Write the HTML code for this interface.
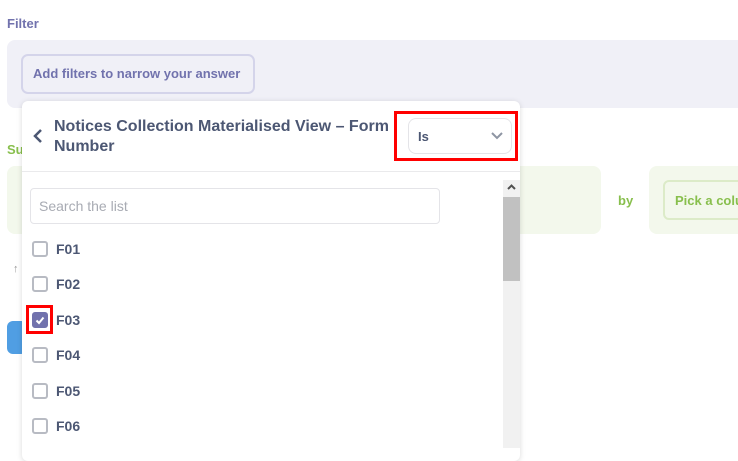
<!DOCTYPE html>
<html><head><style>
body{margin:0;width:738px;height:448px;overflow:hidden;background:#fff;font-family:"Liberation Sans",sans-serif;position:relative}
.a{position:absolute;white-space:nowrap}
.cb{position:absolute;left:32px;width:12px;height:12px;border:2px solid #b8bbc3;border-radius:3px}
.it{position:absolute;left:56px;font-weight:bold;font-size:14px;color:#4c5773}
</style></head><body>
<div class="a" style="left:7px;top:16px;font-size:13px;font-weight:bold;color:#7172ad">Filter</div>
<div class="a" style="left:7px;top:40px;width:740px;height:68px;background:#f0f0f7;border-radius:8px"></div>
<div class="a" style="left:21px;top:54px;width:230px;height:36px;border:2px solid #d4d4ea;border-radius:7px;box-sizing:content-box"></div>
<div class="a" style="left:33px;top:66px;font-size:13px;font-weight:bold;color:#7172ad">Add filters to narrow your answer</div>
<div class="a" style="left:7px;top:142px;font-size:13px;font-weight:bold;color:#88bf4d">Su</div>
<div class="a" style="left:7px;top:166px;width:594px;height:68px;background:#f3f8ec;border-radius:8px"></div>
<div class="a" style="left:618px;top:193px;font-size:13px;font-weight:bold;color:#88bf4d">by</div>
<div class="a" style="left:649px;top:166px;width:100px;height:68px;background:#f3f8ec;border-radius:8px"></div>
<div class="a" style="left:663px;top:180px;width:90px;height:36px;border:2px solid #dcebc8;border-radius:6px"></div>
<div class="a" style="left:675px;top:193px;font-size:13px;font-weight:bold;color:#88bf4d">Pick a colu</div>
<div class="a" style="left:13px;top:263px;font-size:11px;color:#999">↑</div>
<div class="a" style="left:7px;top:321px;width:20px;height:33px;background:#509ee3;border-radius:6px"></div>
<div class="a" style="left:22px;top:101px;width:498px;height:360px;background:#fff;border-radius:6px;box-shadow:0 1px 6px rgba(0,0,0,.15)"></div>
<svg class="a" style="left:32px;top:128px" width="12" height="16"><path d="M9 2L3 8L9 14" stroke="#4c5773" stroke-width="2.5" fill="none"/></svg>
<div class="a" style="left:54px;top:117px;font-size:16px;line-height:20px;font-weight:bold;color:#4c5773;width:350px">Notices Collection Materialised View – Form<br>Number</div>
<div class="a" style="left:22px;top:171px;width:498px;height:1px;background:#eaeaec"></div>
<div class="a" style="left:408px;top:118px;width:102px;height:34px;border:1px solid #e4e4e8;border-radius:8px"></div>
<div class="a" style="left:418px;top:129px;font-size:13px;font-weight:bold;color:#4c5773">Is</div>
<svg class="a" style="left:490px;top:131px" width="14" height="9"><path d="M2 2L7 7L12 2" stroke="#8e95a3" stroke-width="2" fill="none"/></svg>
<div class="a" style="left:394px;top:111px;width:118px;height:44px;border:3px solid #f00"></div>
<div class="a" style="left:30px;top:188px;width:408px;height:34px;border:1px solid #e4e4e8;border-radius:4px"></div>
<div class="a" style="left:39px;top:198px;font-size:14px;color:#a8abb3">Search the list</div>
<div class="a" style="left:503px;top:180px;width:17px;height:268px;background:#f1f1f1"></div>
<div class="a" style="left:503px;top:197px;width:17px;height:84px;background:#c1c1c1"></div>
<svg class="a" style="left:506px;top:183px" width="11" height="8"><path d="M2 6L5.5 2.5L9 6" stroke="#505050" stroke-width="2" fill="none"/></svg>
<div class="cb" style="top:241px"></div><div class="it" style="top:241px">F01</div>
<div class="cb" style="top:276px"></div><div class="it" style="top:276px">F02</div>
<div class="cb" style="top:312px;background:#7172ad;border-color:#7172ad"></div>
<svg class="a" style="left:33px;top:313px" width="14" height="14"><path d="M3.5 7.5L6 10L10.5 4.5" stroke="#fff" stroke-width="2" fill="none"/></svg>
<div class="it" style="top:312px">F03</div>
<div class="a" style="left:26px;top:305px;width:21px;height:23px;border:3px solid #f00"></div>
<div class="cb" style="top:347px"></div><div class="it" style="top:347px">F04</div>
<div class="cb" style="top:383px"></div><div class="it" style="top:383px">F05</div>
<div class="cb" style="top:418px"></div><div class="it" style="top:418px">F06</div>
</body></html>
